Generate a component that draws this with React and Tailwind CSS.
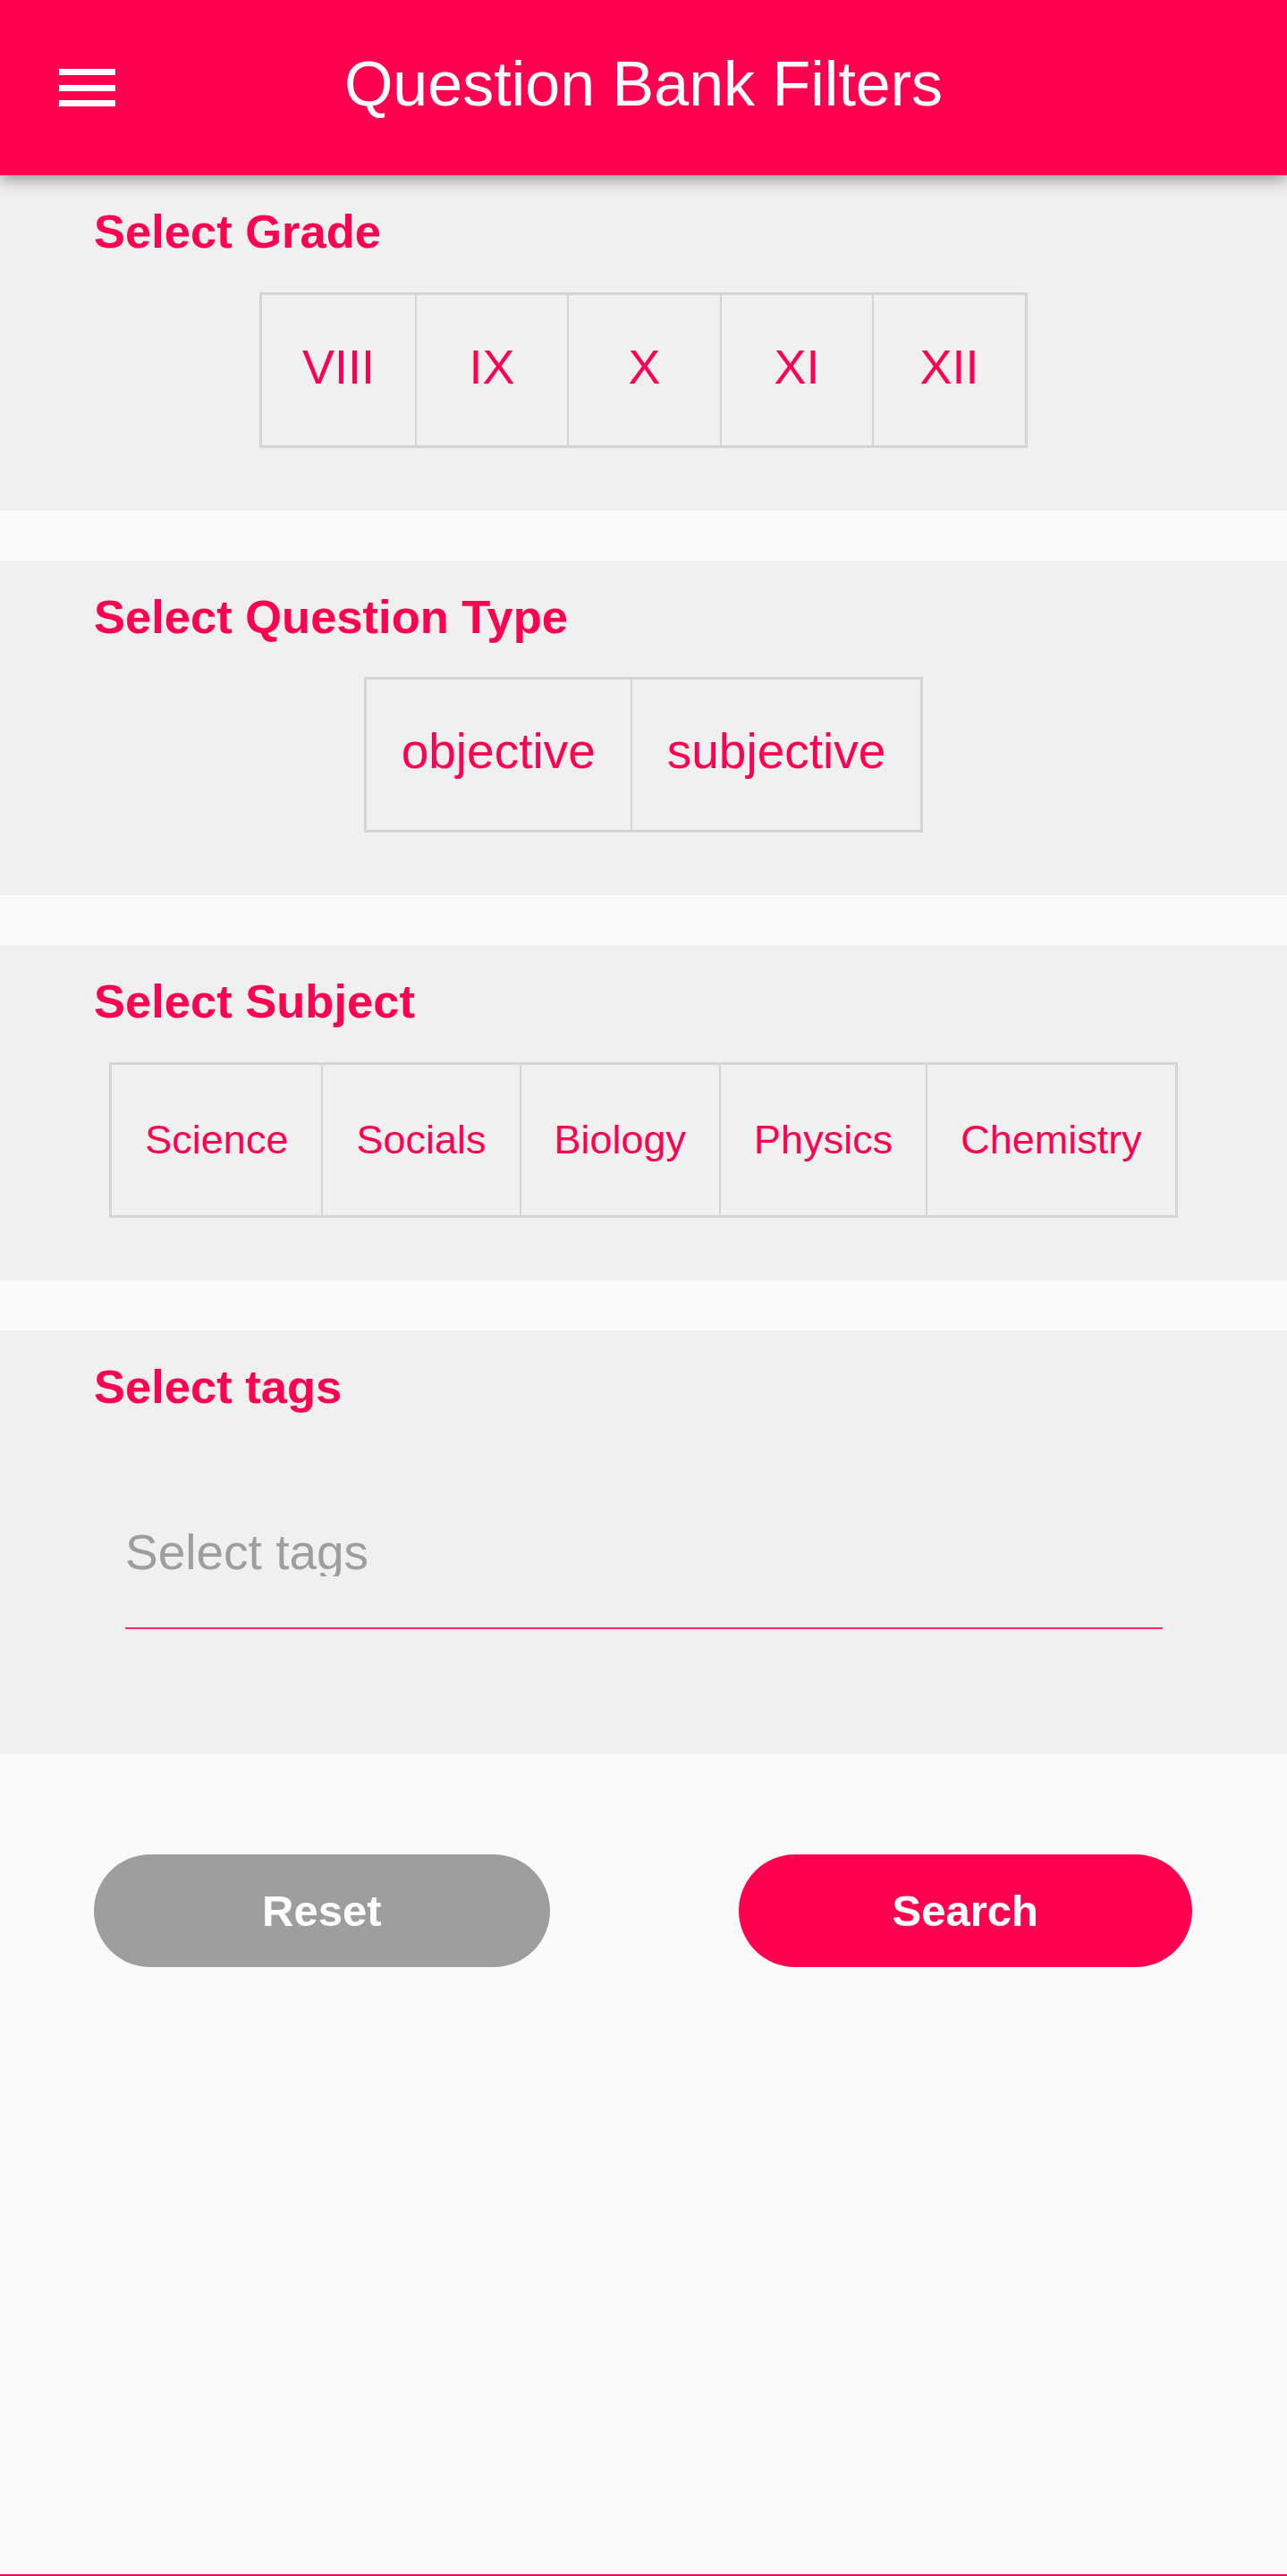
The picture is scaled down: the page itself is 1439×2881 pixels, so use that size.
import React from "react";

const RED = "bg-[#ff0050]";

function Group({ items, btnClass, textClass }) {
  return (
    <div className="flex justify-center">
      <div className="flex h-[174px] border-[3px] border-[#d5d5d5]">
        {items.map((it, i) => (
          <button
            key={it}
            className={`flex items-center justify-center h-full text-[#ff0050] ${textClass} ${btnClass} ${i > 0 ? "border-l-2 border-[#d5d5d5]" : ""}`}
          >
            {it}
          </button>
        ))}
      </div>
    </div>
  );
}

function Section({ title, children, className = "" }) {
  return (
    <section className={`bg-[#f0f0f0] pt-[37px] ${className}`}>
      <h2 className="pl-[105px] text-[52.5px] leading-none font-bold text-[#ff0050]">{title}</h2>
      {children}
    </section>
  );
}

export default function App() {
  return (
    <div
      className="min-h-[2881px] flex flex-col bg-[#fafafa]"
      style={{ fontFamily: '"Liberation Sans", Arial, sans-serif' }}
    >
      <header className={`relative z-10 h-[196px] ${RED} shadow-[0_6px_16px_rgba(0,0,0,0.35)] grid grid-cols-[1fr_auto_1fr] items-center`}>
        <div className="pl-[66px] flex flex-col gap-[10.5px] w-fit">
          <span className="block w-[63px] h-[7px] bg-white" />
          <span className="block w-[63px] h-[7px] bg-white" />
          <span className="block w-[63px] h-[7px] bg-white" />
        </div>
        <h1 className="text-white text-[70px] leading-none pb-[9px] font-normal">Question Bank Filters</h1>
        <div />
      </header>

      <Section title="Select Grade" className="pb-[70px]">
        <div className="mt-[41px]">
          <Group
            items={["VIII", "IX", "X", "XI", "XII"]}
            btnClass="w-[170.5px] pb-[8px]"
            textClass="text-[54px] leading-none"
          />
        </div>
      </Section>

      <Section title="Select Question Type" className="mt-[56px] pb-[70px]">
        <div className="mt-[41px]">
          <Group
            items={["objective", "subjective"]}
            btnClass="px-[39px] pb-[8px]"
            textClass="text-[55px] leading-none"
          />
        </div>
      </Section>

      <Section title="Select Subject" className="mt-[56px] pb-[70px]">
        <div className="mt-[41px]">
          <Group
            items={["Science", "Socials", "Biology", "Physics", "Chemistry"]}
            btnClass="px-[37px]"
            textClass="text-[45px] leading-none"
          />
        </div>
      </Section>

      <Section title="Select tags" className="mt-[56px] pb-[140px]">
        <div className="mt-[131px] ml-[140px] mr-[139px] pb-[57px] border-b-2 border-[#ff2d6b]">
          <input
            type="text"
            placeholder="Select tags"
            className="w-full h-[55px] leading-none text-[55px] bg-transparent outline-none text-[#333] placeholder:text-[#9e9e9e]"
          />
        </div>
      </Section>

      <div className="mt-[112px] grid grid-cols-2">
        <div className="px-[105px]">
          <button className="w-full h-[126px] rounded-full bg-[#9e9e9e] text-white font-bold text-[49px] leading-none">
            Reset
          </button>
        </div>
        <div className="px-[106px]">
          <button className={`w-full h-[126px] rounded-full ${RED} text-white font-bold text-[49px] leading-none`}>
            Search
          </button>
        </div>
      </div>

      <div className="flex-1" />
      <div className={`h-[2px] ${RED}`} />
    </div>
  );
}
